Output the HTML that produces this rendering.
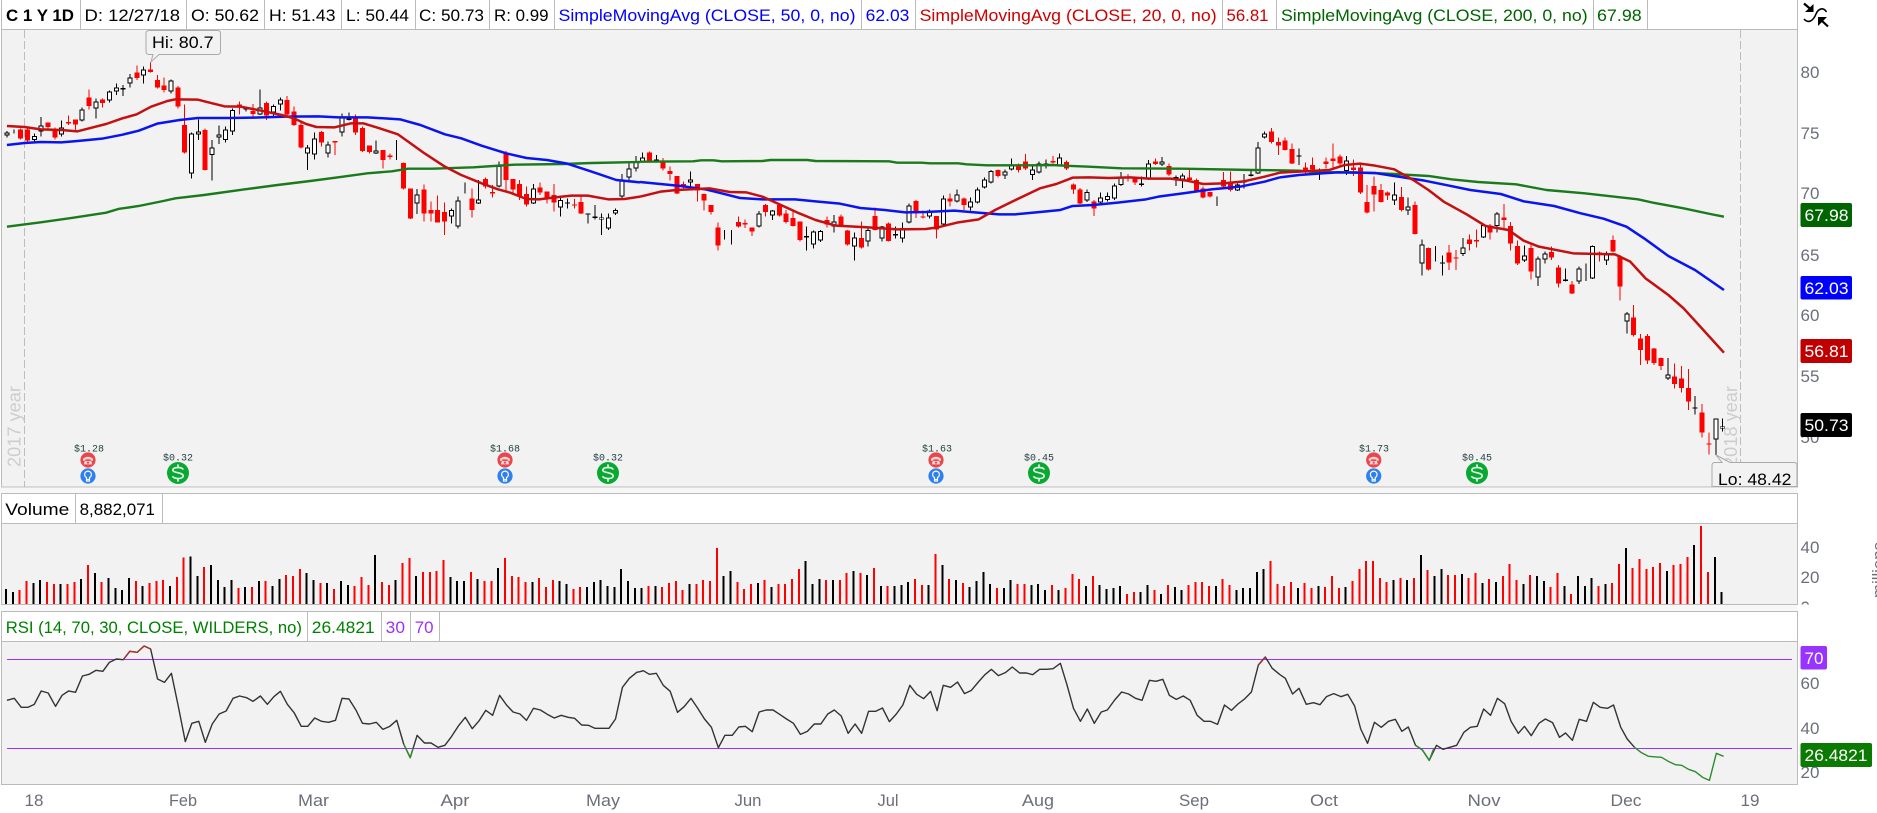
<!DOCTYPE html>
<html><head><meta charset="utf-8"><title>C 1 Y 1D</title>
<style>
html,body{margin:0;padding:0;background:#fff;width:1877px;height:813px;overflow:hidden}
svg{display:block}
text{font-family:"Liberation Sans",sans-serif;font-size:17px}
.ns,.ns *{vector-effect:non-scaling-stroke}
.ax{fill:#6b6f7b}
.bt{fill:#fff}
.mn{font-family:"Liberation Mono",monospace;font-size:10px;fill:#1f3f3f;text-anchor:middle}
</style></head><body>
<svg width="1877" height="813" viewBox="0 0 1877 813" xmlns="http://www.w3.org/2000/svg">
<defs>
<g id="ph"><circle r="7.6" fill="#e8474c"/><path d="M-5-1.2Q0-5.2 5-1.2V.8H2.6V-.6H-2.6V.8H-5Z" fill="#fbd5d5"/><path d="M-3.2 1H3.2L4.2 4.4H-4.2Z" fill="#fbd5d5"/><circle cy="2.6" r="1.1" fill="#e8474c"/></g>
<g id="bu"><circle r="7.6" fill="#2f80ed"/><path d="M-1.5 1.6A3.4 3.4 0 1 1 1.5 1.6V5H-1.5Z" fill="none" stroke="#fff" stroke-width="1.2"/><path d="M-1 3.4H1" stroke="#fff"/></g>
<g id="dl"><ellipse rx="11" ry="11" fill="#08a832"/><path d="M5.2-3.4C4.4-6-4.8-6.4-5.2-3C-5.6 .2 5.4-1 5.2 3C5 6.5-4.6 6.2-5.4 3.2" fill="none" stroke="#e8f8ea" stroke-width="1.6"/><path d="M0-8.6V-5.6M0 5.6V8.6" stroke="#e8f8ea" stroke-width="1.6"/></g>
</defs>

<!-- panels -->
<rect x="1.5" y="-2" width="1796" height="31.5" fill="#fff" stroke="#bbb"/>
<rect x="1.5" y="29.5" width="1796" height="457.5" fill="#f2f2f2" stroke="#bbb"/>
<rect x="0" y="488" width="1797" height="5" fill="#f7f7f7"/>
<rect x="1.5" y="493.5" width="1796" height="30" fill="#fff" stroke="#bbb"/>
<rect x="1.5" y="523.5" width="1796" height="81" fill="#f2f2f2" stroke="#bbb"/>
<rect x="0" y="605" width="1797" height="6" fill="#f7f7f7"/>
<rect x="1.5" y="611.5" width="1796" height="30" fill="#fff" stroke="#bbb"/>
<rect x="1.5" y="641.5" width="1796" height="143" fill="#f2f2f2" stroke="#bbb"/>

<!-- header dividers -->
<path d="M80.5 0V29M186.5 0V29M264.5 0V29M341.5 0V29M415.5 0V29M489.5 0V29M554.5 0V29M861.5 0V29M915.5 0V29M1222.5 0V29M1276.5 0V29M1593.5 0V29M1647.5 0V29M75.5 494V523M162.5 494V523M307.5 612V641M381.5 612V641M410.5 612V641M439.5 612V641" stroke="#bbb" fill="none"/>

<!-- header text -->
<text x="6" y="21" font-weight="bold" textLength="68" lengthAdjust="spacingAndGlyphs" style="font-weight:bold">C 1 Y 1D</text>
<text x="84.5" y="21" textLength="95.5" lengthAdjust="spacingAndGlyphs">D: 12/27/18</text>
<text x="191" y="21" textLength="68" lengthAdjust="spacingAndGlyphs">O: 50.62</text>
<text x="269" y="21" textLength="66.5" lengthAdjust="spacingAndGlyphs">H: 51.43</text>
<text x="346" y="21" textLength="63" lengthAdjust="spacingAndGlyphs">L: 50.44</text>
<text x="419" y="21" textLength="65" lengthAdjust="spacingAndGlyphs">C: 50.73</text>
<text x="494" y="21" textLength="54.5" lengthAdjust="spacingAndGlyphs">R: 0.99</text>
<text x="558.5" y="21" fill="#0000ff" textLength="297" lengthAdjust="spacingAndGlyphs">SimpleMovingAvg (CLOSE, 50, 0, no)</text>
<text x="865.7" y="21" fill="#0000ff" textLength="43.7" lengthAdjust="spacingAndGlyphs">62.03</text>
<text x="919.6" y="21" fill="#cc0000" textLength="297" lengthAdjust="spacingAndGlyphs">SimpleMovingAvg (CLOSE, 20, 0, no)</text>
<text x="1226.5" y="21" fill="#cc0000" textLength="42" lengthAdjust="spacingAndGlyphs">56.81</text>
<text x="1281" y="21" fill="#006400" textLength="306.6" lengthAdjust="spacingAndGlyphs">SimpleMovingAvg (CLOSE, 200, 0, no)</text>
<text x="1597" y="21" fill="#006400" textLength="44.7" lengthAdjust="spacingAndGlyphs">67.98</text>

<text x="5.3" y="515" textLength="64" lengthAdjust="spacingAndGlyphs">Volume</text>
<text x="79.6" y="515" textLength="75.4" lengthAdjust="spacingAndGlyphs">8,882,071</text>
<text x="5.7" y="633" fill="#008000" textLength="296.3" lengthAdjust="spacingAndGlyphs">RSI (14, 70, 30, CLOSE, WILDERS, no)</text>
<text x="311.8" y="633" fill="#008000" textLength="62.9" lengthAdjust="spacingAndGlyphs">26.4821</text>
<text x="385.7" y="633" fill="#9933ff" textLength="19.3" lengthAdjust="spacingAndGlyphs">30</text>
<text x="414.7" y="633" fill="#9933ff" textLength="18.8" lengthAdjust="spacingAndGlyphs">70</text>

<!-- year dashes + labels -->
<path d="M24.5 30V487M1740.5 30V487" stroke="#bdbdbd" stroke-dasharray="8 3" fill="none"/>
<text transform="translate(20.5 467) rotate(-90)" fill="#cdcdcd" style="font-size:18px" textLength="81" lengthAdjust="spacingAndGlyphs">2017 year</text>
<text transform="translate(1737 467) rotate(-90)" fill="#cdcdcd" style="font-size:18px" textLength="81" lengthAdjust="spacingAndGlyphs">2018 year</text>

<!-- candles -->
<g class="ns" transform="translate(7 0) scale(6.835 .33333)" shape-rendering="crispEdges" fill="none">
<path stroke="#000" stroke-width="1" d="M0 393V412M1 388V400M4 400V430M5 351V410M8 362V410M11 322V365M13 295V356M15 272V307M16 250V285M17 255V288M18 222V262M20 199V250M24 238V280M27 398V535M28 358V420M30 420V542M31 376V432M32 380V428M33 325V405M35 320V335M37 268V345M39 314V350M40 293V332M44 435V510M45 397V478M47 425V472M49 340V410M50 338V362M54 422V462M57 420V480M60 567V642M65 625V670M66 590V686M67 547V580M69 540V612M72 484V562M77 552V612M81 588V650M82 595V625M85 640V670M86 615V658M87 640V705M88 640V690M89 625V645M90 522V598M91 490V548M92 468V515M93 458V486M95 465V488M100 514V572M105 690V718M106 690V734M110 633V682M112 630V660M117 680V752M118 692V746M119 690V726M121 645V698M124 698V782M126 680V740M128 678V724M130 680V716M131 668V728M132 610V670M135 628V655M137 586V676M139 568V608M141 592V632M142 562V610M143 533V566M144 510V550M146 508V537M147 475V512M150 500V540M151 484V520M152 478V505M154 460V500M158 568V606M160 578V610M161 578V605M162 550V600M163 516V558M166 530V560M167 480V540M169 471V498M171 526V558M172 520V564M177 590V618M180 550V573M181 522V565M182 510V530M183 426V522M184 394V416M189 445V495M192 506V540M196 468V525M203 547V615M205 592V645M207 718V827M209 738V785M210 767V827M213 714V768M216 670V714M218 636V698M222 736V786M224 770V858M225 755V790M228 806V845M230 800V852M231 790V843M232 736V837M234 755V795M237 936V1000M243 1074V1140M247 1188V1244M250 1255V1365M251 1255V1294"/>
<path stroke="#f00" stroke-width="1" d="M2 385V418M3 386V428M6 367V392M7 383V418M9 347V375M10 358V392M12 268V328M14 296V322M19 196V240M21 186V218M22 225V265M23 232V278M25 258V325M26 313V460M29 386V512M34 305V344M36 312V350M38 305V360M41 288V350M42 320V378M43 365V445M46 393V440M48 423V465M51 343V405M52 380V456M53 436V460M55 450V506M56 460V478M58 487V568M59 566V657M61 553V665M62 605V665M63 586V668M64 608V705M68 565V652M70 532V565M71 555V592M73 453V575M74 537V582M75 540V600M76 560V620M78 547V585M79 574V610M80 552V635M83 597V625M84 590V642M94 455V484M96 474V512M97 500V542M98 528V582M99 544V572M101 552V605M102 580V632M103 615V644M104 668V752M107 650V682M108 658V684M109 682V708M111 612V650M113 610V650M114 630V670M115 630V680M116 664V724M120 650V682M122 643V680M123 690V736M125 664V745M127 622V692M129 668V725M133 600V654M134 632V656M136 648V716M138 580V620M140 592V630M145 508V532M148 490V518M149 462V510M153 468V490M155 482V510M156 550V582M157 564V612M159 600V648M164 522V545M165 532V555M168 475V495M170 490V528M173 510V545M174 535V578M175 560V596M176 575V592M178 516V565M179 514V574M185 384V430M186 412V465M187 412V452M188 430V492M190 488V525M191 472V520M193 472V505M194 430V505M195 463V500M197 478V528M198 487V582M199 555V640M200 530V635M201 552V608M202 575V600M204 561V634M206 604V704M208 742V812M211 735V810M212 750V810M214 704V752M215 688V742M217 672V718M219 612V686M220 666V752M221 722V795M223 730V838M226 740V780M227 795V863M229 843V882M233 755V785M235 706V758M236 765V902M238 915V1010M239 1002V1095M240 1002V1092M241 1044V1095M242 1072V1110M244 1090V1166M245 1098V1178M246 1107V1230M248 1212V1313M249 1297V1364"/>
<path stroke="#f00" stroke-width="5" d="M2 388V416M3 388V422M6 367V381M7 387V412M9 366V371M10 358V374M12 292V318M14 298V309M19 217V234M21 208V216M22 240V263M23 256V270M25 262V320M26 375V458M29 390V510M34 314V320M36 333V342M38 309V347M41 300V344M42 334V375M43 375V443M46 396V428M48 423V428M51 354V398M52 384V453M53 437V456M55 450V480M56 466V471M58 489V566M59 566V655M61 568V640M62 630V640M63 630V667M64 636V664M68 595V630M70 537V560M71 576V581M73 460V540M74 537V568M75 552V590M76 582V614M78 562V578M79 574V594M80 585V608M83 613V616M84 606V640M94 458V483M96 486V506M97 513V522M98 528V580M99 552V562M101 552V572M102 582V602M103 615V636M104 682V736M107 666V680M108 669V674M109 682V694M111 615V636M113 615V647M114 640V666M115 654V678M116 664V720M120 660V674M122 650V677M123 692V733M125 714V743M127 648V690M129 670V723M133 603V640M134 650V653M136 648V688M138 595V604M140 595V615M145 510V528M148 494V510M149 484V506M153 483V488M155 486V506M156 553V569M157 568V610M159 604V626M164 530V534M165 535V548M168 484V492M170 498V524M173 532V540M174 540V574M175 565V592M176 576V590M178 540V560M179 544V570M185 394V426M186 426V436M187 421V450M188 447V490M190 502V512M191 495V508M193 484V492M194 475V483M195 470V490M197 502V510M198 502V578M199 606V637M200 558V584M201 570V606M202 578V586M204 591V630M206 615V702M208 744V808M211 757V787M212 773V776M214 718V732M215 720V725M217 676V698M219 652V660M220 678V731M221 738V790M223 744V815M226 756V773M227 802V850M229 854V880M233 757V762M235 720V755M236 770V860M238 952V1005M239 1015V1050M240 1008V1082M241 1045V1089M242 1074V1098M244 1129V1152M245 1135V1164M246 1164V1205M248 1237V1298M249 1330V1334"/>
<path stroke="#000" stroke-width="5" d="M17 264V269M35 325V329M50 355V360M82 607V611M85 640V643M86 650V654M95 478V484M117 708V712M130 702V706M152 490V495M166 551V555M171 531V535M181 545V548M182 524V528M189 466V470M192 514V520M210 787V791M228 839V843M247 1222V1226"/>
<g id="wo" stroke="#000" stroke-width="5">
<path id="wb" d="M0 401V404M1 394V395M4 411V417M5 380V392M8 386V401M11 331V359M13 308V322M15 278V299M16 266V272M18 236V248M20 212V223M24 244V271M27 403V517M28 397V400M30 445V462M31 407V409M32 391V417M33 333V392M37 326V340M39 321V335M40 301V311M44 446V457M45 418V460M47 436V457M49 353V395M54 454V457M57 457V458M60 587V607M65 633V647M66 604V677M67 571V572M69 601V608M72 501V557M77 568V607M81 603V620M87 655V657M88 655V683M89 633V637M90 545V587M91 508V530M92 489V502M93 475V481M100 541V545M105 700V701M106 700V701M110 643V677M112 634V643M118 697V730M119 696V718M121 667V677M124 715V737M126 693V722M128 683V713M131 687V713M132 619V665M135 635V647M137 598V671M139 586V602M141 607V620M142 571V605M143 541V560M144 516V545M146 517V524M147 497V506M150 511V522M151 493V514M154 475V495M158 579V599M160 595V605M161 591V597M162 559V593M163 535V552M167 493V532M169 487V490M172 529V535M177 601V602M180 557V568M183 445V517M184 403V409M196 485V510M203 586V599M205 622V629M207 736V787M209 763V764M213 745V759M216 678V709M218 643V675M222 769V778M224 778V829M225 763V775M230 808V842M231 817V818M232 741V832M234 767V778M237 943V962M243 1127V1133M250 1259V1315M251 1282V1284"/>
<use href="#wb" transform="translate(0 -3)"/>
<use href="#wb" transform="translate(0 3)"/>
</g>
<use href="#wb" style="stroke:#fff;stroke-width:3px"/>
</g>

<!-- moving averages -->
<g class="ns" fill="none" stroke-linejoin="round">
<g stroke="#1b7a1b" stroke-width="2.4">
<polyline transform="scale(.40816 .33333)" points="17,680 100,667 180,653 260,638 290,627 340,618 400,603 430,595 500,585 600,568 680,555 760,543 840,530 900,520 960,514 1000,506 1060,506 1160,502 1260,494 1380,492 1450,489 1568,486"/>
<polyline transform="translate(640 0) scale(.40816 .33333)" points="0,485 130,484 150,481 180,481 200,484 300,483 320,480 410,480 430,483 610,484 630,488 690,488 710,490 780,490 800,493 850,496 960,496 1010,495 1040,497 1100,500 1180,505 1330,506 1500,510 1568,511"/>
<polyline transform="translate(1280 0) scale(.38073 .33333)" points="0,511 50,512 100,517 200,517 300,522 390,528 450,538 520,546 620,553 700,570 800,580 940,598 980,608 1060,625 1130,642 1166,650"/>
</g>
<g stroke="#0a14f0" stroke-width="2.5">
<polyline transform="scale(.40816 .33333)" points="17,435 60,429 100,426 150,427 190,423 250,416 300,404 340,392 385,371 440,360 485,354 560,354 620,353 700,350 780,349 830,352 900,352 980,358 1030,375 1090,403 1130,415 1180,437 1240,460 1290,474 1340,480 1390,491 1450,515 1510,540 1568,547"/>
<polyline transform="translate(640 0) scale(.40816 .33333)" points="0,546 50,552 100,558 160,568 200,580 245,594 300,598 380,598 430,604 490,611 540,624 600,630 650,637 700,636 770,632 820,637 880,643 920,643 980,636 1030,630 1060,618 1110,615 1170,608 1240,598 1270,590 1330,580 1400,568 1470,560 1530,545 1568,532"/>
<polyline transform="translate(1280 0) scale(.38073 .33333)" points="0,532 50,525 100,521 150,517 250,519 340,535 380,542 440,556 500,570 580,582 640,604 720,618 790,640 850,656 910,680 960,718 1020,768 1090,810 1166,870"/>
</g>
<g stroke="#c41010" stroke-width="2.5">
<polyline transform="scale(.40816 .33333)" points="17,378 60,381 100,388 150,390 190,394 215,386 260,372 300,355 335,343 370,320 410,303 430,298 485,299 520,310 550,319 590,320 640,332 690,345 720,355 750,372 775,381 820,382 860,370 890,370 925,383 975,403 1000,425 1040,460 1090,500 1130,525 1180,550 1220,568 1250,578 1290,597 1320,598 1360,592 1400,587 1440,587 1490,598 1530,597 1568,590"/>
<polyline transform="translate(640 0) scale(.40816 .33333)" points="0,590 50,575 90,570 170,565 220,576 260,577 300,590 340,612 390,640 430,660 480,677 560,682 630,688 700,687 730,682 780,667 830,658 870,630 920,600 980,565 1020,552 1060,533 1100,532 1150,534 1200,532 1250,536 1300,536 1340,542 1380,552 1430,550 1480,544 1530,530 1568,518"/>
<polyline transform="translate(1280 0) scale(.38073 .33333)" points="0,518 130,510 170,495 210,491 250,497 300,508 350,540 390,570 430,605 490,643 540,678 600,690 640,722 680,740 770,760 880,763 920,785 940,810 960,835 1020,885 1060,925 1100,975 1166,1058"/>
</g>
</g>

<!-- hi / lo tooltips -->
<path d="M149 30.5H217.5Q220.5 30.5 220.5 33.5V51.5Q220.5 54.5 217.5 54.5H159L151 62L153 54.5H149Q146 54.5 146 51.5V33.5Q146 30.5 149 30.5Z" fill="#f2f2f2" stroke="#aaa"/>
<text x="152" y="48" textLength="61.5" lengthAdjust="spacingAndGlyphs">Hi: 80.7</text>
<path d="M1712 486.5V465.5Q1712 462.5 1715 462.5H1722L1716 455L1730 462.5H1794Q1797 462.5 1797 465.5V486.5Z" fill="#f2f2f2" stroke="#aaa"/>
<text x="1718" y="485" textLength="73.4" lengthAdjust="spacingAndGlyphs">Lo: 48.42</text>

<!-- events -->
<text class="mn" x="89" y="451.5">$1.28</text><use href="#ph" x="88" y="460"/><use href="#bu" x="88" y="476"/>
<text class="mn" x="178" y="460.5">$0.32</text><use href="#dl" x="178" y="473"/>
<text class="mn" x="505" y="451.5">$1.68</text><use href="#ph" x="505" y="460"/><use href="#bu" x="505" y="476"/>
<text class="mn" x="608" y="460.5">$0.32</text><use href="#dl" x="608" y="473"/>
<text class="mn" x="937" y="451.5">$1.63</text><use href="#ph" x="936" y="460"/><use href="#bu" x="936" y="476"/>
<text class="mn" x="1039" y="460.5">$0.45</text><use href="#dl" x="1039" y="473"/>
<text class="mn" x="1374" y="451.5">$1.73</text><use href="#ph" x="1373.7" y="460"/><use href="#bu" x="1373.7" y="476"/>
<text class="mn" x="1477" y="460.5">$0.45</text><use href="#dl" x="1477" y="473"/>

<!-- volume -->
<g class="ns" transform="translate(6 540) scale(6.835 .33333)" shape-rendering="crispEdges" fill="none" stroke-width="2">
<path stroke="#000" d="M0 147V192M1 156V192M4 129V192M5 120V192M8 132V192M11 117V192M13 99V192M15 114V192M16 144V192M17 150V192M18 114V192M20 138V192M24 138V192M27 50V192M28 108V192M30 75V192M31 120V192M32 141V192M33 120V192M35 141V192M37 123V192M39 138V192M40 117V192M44 99V192M45 120V192M47 129V192M49 123V192M50 135V192M54 45V192M57 120V192M60 108V192M65 111V192M66 123V192M67 123V192M69 117V192M72 84V192M77 126V192M81 123V192M82 132V192M85 141V192M86 126V192M87 120V192M88 138V192M89 141V192M90 87V192M91 123V192M92 144V192M93 144V192M95 138V192M100 132V192M105 108V192M106 93V192M110 129V192M112 141V192M117 63V192M118 132V192M119 117V192M121 120V192M124 93V192M126 105V192M128 138V192M130 138V192M131 135V192M132 126V192M135 135V192M137 75V192M139 120V192M141 141V192M142 123V192M143 96V192M144 132V192M146 144V192M147 120V192M150 135V192M151 132V192M152 150V192M154 150V192M158 138V192M160 135V192M161 147V192M162 144V192M163 138V192M166 156V192M167 135V192M169 162V192M171 141V192M172 150V192M177 138V192M180 150V192M181 144V192M182 144V192M183 96V192M184 87V192M189 144V192M192 138V192M196 141V192M203 120V192M205 120V192M207 45V192M209 108V192M210 87V192M213 102V192M216 129V192M218 126V192M222 132V192M224 108V192M225 123V192M228 138V192M230 108V192M231 138V192M232 114V192M234 132V192M237 24V192M243 93V192M247 15V192M250 51V192M251 156V192"/>
<path stroke="#f00" d="M2 150V192M3 123V192M6 126V192M7 132V192M9 132V192M10 126V192M12 75V192M14 126V192M19 123V192M21 129V192M22 123V192M23 120V192M25 111V192M26 53V192M29 81V192M34 144V192M36 141V192M38 123V192M41 105V192M42 108V192M43 87V192M46 129V192M48 147V192M51 138V192M52 111V192M53 135V192M55 126V192M56 135V192M58 69V192M59 54V192M61 96V192M62 96V192M63 93V192M64 60V192M68 96V192M70 123V192M71 123V192M73 54V192M74 108V192M75 111V192M76 126V192M78 114V192M79 141V192M80 120V192M83 147V192M84 141V192M94 138V192M96 141V192M97 129V192M98 123V192M99 150V192M101 132V192M102 120V192M103 123V192M104 24V192M107 126V192M108 147V192M109 132V192M111 120V192M113 132V192M114 132V192M115 117V192M116 87V192M120 120V192M122 120V192M123 99V192M125 99V192M127 84V192M129 138V192M133 117V192M134 135V192M136 42V192M138 117V192M140 129V192M145 144V192M148 132V192M149 132V192M153 135V192M155 144V192M156 102V192M157 117V192M159 108V192M164 162V192M165 156V192M168 150V192M170 135V192M173 135V192M174 126V192M175 126V192M176 138V192M178 117V192M179 135V192M185 63V192M186 132V192M187 138V192M188 126V192M190 129V192M191 144V192M193 141V192M194 108V192M195 144V192M197 123V192M198 87V192M199 63V192M200 63V192M201 114V192M202 126V192M204 114V192M206 114V192M208 90V192M211 105V192M212 105V192M214 114V192M215 99V192M217 117V192M219 108V192M220 72V192M221 120V192M223 105V192M226 141V192M227 99V192M229 162V192M233 138V192M235 129V192M236 72V192M238 84V192M239 57V192M240 87V192M241 81V192M242 69V192M244 75V192M245 72V192M246 51V192M248 -42V192M249 96V192"/>
</g>

<!-- RSI -->
<path d="M7 659.5H1792M7 748.5H1792" stroke="#9933ff" fill="none"/>
<g class="ns" fill="none" stroke-linejoin="round" stroke-width="1.4">
<g stroke="#333">
<polyline transform="translate(0 540) scale(.40816 .33333)" points="17,481 35,475 52,502 68,502 84,493 101,453 118,459 136,499 152,466 168,453 185,457 202,408 218,403 235,391 252,394 268,367 285,357 302,359 318,334 336,337 353,318 369,327 386,417 403,427 420,400 437,500 454,605 470,550 487,544 503,607 520,552 537,522 554,513 571,475 587,468 604,473 620,484 638,468 655,493 671,470 687,454 704,493 721,519 738,559 754,559 771,534 788,544 805,547 822,541 838,475 855,477 872,510 888,550 905,552 922,547 938,568 955,559 972,541 989,612 1005,653 1022,586 1040,609 1056,609 1073,622 1090,616 1106,590 1123,558 1140,532 1157,566 1174,542 1190,511 1207,526 1224,466 1241,495 1257,516 1274,522 1290,541 1307,505 1324,510 1341,523 1358,534 1375,526 1392,532 1408,535 1425,555 1442,556 1458,565 1475,565 1492,565 1508,537 1525,442 1542,415 1560,397 1568,395"/>
<polyline transform="translate(640 540) scale(.40816 .33333)" points="0,395 8,392 23,403 40,400 57,436 74,454 92,517 108,500 125,475 141,504 158,537 175,562 192,623 208,586 226,586 242,561 258,559 275,575 292,516 309,510 326,510 342,523 359,537 376,550 393,583 410,574 427,552 443,552 460,522 476,510 493,528 510,580 527,552 543,580 560,514 577,514 594,504 611,545 628,522 644,495 661,436 678,463 695,476 712,454 728,512 743,436 761,442 778,426 795,461 812,451 829,426 845,404 861,388 878,407 895,398 912,381 930,399 947,399 962,404 979,388 996,388 1012,386 1030,370 1046,434 1062,505 1079,544 1096,507 1113,550 1130,516 1145,510 1163,480 1180,456 1197,462 1214,475 1230,481 1248,421 1264,424 1281,418 1297,466 1314,478 1331,468 1348,481 1365,526 1382,544 1398,544 1415,553 1432,495 1449,511 1465,492 1482,476 1498,456 1515,375 1532,351 1549,385 1568,404"/>
<polyline transform="translate(1280 540) scale(.38073 .33333)" points="0,404 14,415 33,462 50,445 69,493 88,488 105,494 122,470 141,461 160,470 178,463 196,498 212,567 230,610 248,547 266,562 285,544 303,538 320,574 337,561 356,616 374,630 392,661 411,616 428,628 446,622 464,616 483,577 500,562 518,559 535,507 553,526 571,475 590,491 607,544 626,580 642,559 660,587 680,550 697,537 716,548 734,592 750,579 768,601 786,538 805,544 823,487 841,502 860,505 876,495 895,562 912,597 931,622"/>
</g>
<g stroke="#a83232">
<polyline transform="translate(0 540) scale(.40816 .33333)" points="302,359 318,334 336,337 353,318 369,327"/>
<polyline transform="translate(640 540) scale(.40816 .33333)" points="1515,375 1532,351"/>
</g>
<g stroke="#2e8b2e">
<polyline transform="translate(0 540) scale(.40816 .33333)" points="989,612 1005,653 1012,625"/>
<polyline transform="translate(1280 540) scale(.38073 .33333)" points="356,616 374,630 392,661 404,625"/>
<polyline transform="translate(1280 540) scale(.38073 .33333)" points="931,622 948,637 968,649 1002,652 1020,664 1038,674 1055,676 1073,688 1091,695 1110,712 1128,721 1146,640 1165,649"/>
</g>
</g>

<!-- price axis -->
<text class="ax" x="1800.5" y="78">80</text>
<text class="ax" x="1800.5" y="139">75</text>
<text class="ax" x="1800.5" y="199">70</text>
<text class="ax" x="1800.5" y="261">65</text>
<text class="ax" x="1800.5" y="321">60</text>
<text class="ax" x="1800.5" y="382">55</text>
<text class="ax" x="1800.5" y="443">50</text>
<rect x="1800.5" y="203" width="51.5" height="24" rx="2" fill="#006400"/><text class="bt" x="1804.5" y="221" textLength="44" lengthAdjust="spacingAndGlyphs">67.98</text>
<rect x="1800.5" y="276" width="51.5" height="23.5" rx="2" fill="#0000ff"/><text class="bt" x="1804.5" y="294" textLength="44" lengthAdjust="spacingAndGlyphs">62.03</text>
<rect x="1800.5" y="339" width="51.5" height="24" rx="2" fill="#c00000"/><text class="bt" x="1804.5" y="357" textLength="44" lengthAdjust="spacingAndGlyphs">56.81</text>
<rect x="1800.5" y="413" width="51.5" height="24" rx="2" fill="#000"/><text class="bt" x="1804.5" y="431" textLength="44" lengthAdjust="spacingAndGlyphs">50.73</text>

<!-- volume axis -->
<text class="ax" x="1800.5" y="553">40</text>
<text class="ax" x="1800.5" y="583">20</text>
<clipPath id="z"><rect x="1798" y="520" width="79" height="84.5"/></clipPath>
<g clip-path="url(#z)"><text class="ax" x="1800.5" y="613">0</text></g>
<text class="ax" transform="translate(1884 598) rotate(-90)" textLength="56" lengthAdjust="spacingAndGlyphs">millions</text>

<!-- RSI axis -->
<text class="ax" x="1800.5" y="689">60</text>
<text class="ax" x="1800.5" y="734">40</text>
<text class="ax" x="1800.5" y="778">20</text>
<rect x="1800.5" y="646" width="26.5" height="23.5" rx="2" fill="#9933ff"/><text class="bt" x="1804.5" y="664">70</text>
<rect x="1800.5" y="743" width="71.5" height="24" rx="2" fill="#0a7a00"/><text class="bt" x="1804.5" y="761" textLength="63" lengthAdjust="spacingAndGlyphs">26.4821</text>

<!-- x axis -->
<g class="ax" text-anchor="middle">
<text x="34" y="806">18</text>
<text x="183" y="806" textLength="28" lengthAdjust="spacingAndGlyphs">Feb</text>
<text x="313.5" y="806" textLength="31" lengthAdjust="spacingAndGlyphs">Mar</text>
<text x="455" y="806" textLength="29" lengthAdjust="spacingAndGlyphs">Apr</text>
<text x="603" y="806" textLength="34" lengthAdjust="spacingAndGlyphs">May</text>
<text x="748" y="806" textLength="27" lengthAdjust="spacingAndGlyphs">Jun</text>
<text x="888" y="806" textLength="21" lengthAdjust="spacingAndGlyphs">Jul</text>
<text x="1038" y="806" textLength="32" lengthAdjust="spacingAndGlyphs">Aug</text>
<text x="1194" y="806" textLength="30" lengthAdjust="spacingAndGlyphs">Sep</text>
<text x="1324" y="806" textLength="28" lengthAdjust="spacingAndGlyphs">Oct</text>
<text x="1484" y="806" textLength="33" lengthAdjust="spacingAndGlyphs">Nov</text>
<text x="1626" y="806" textLength="31" lengthAdjust="spacingAndGlyphs">Dec</text>
<text x="1750" y="806">19</text>
</g>

<!-- top-right icon -->
<g>
<path d="M1804 3.5L1811 9.5" stroke="#000" stroke-width="2.2" fill="none"/>
<path d="M1813.5 4V12H1805Z" fill="#000"/>
<path d="M1804 19C1808 23.5 1813 21.5 1816 14C1818 9 1823 6.5 1826.5 12" stroke="#000" stroke-width="1.6" fill="none"/>
<path d="M1818 17H1827L1818 26Z" fill="#000"/>
<path d="M1821 20L1828 26.5" stroke="#000" stroke-width="2.2" fill="none"/>
</g>
</svg>
</body></html>
